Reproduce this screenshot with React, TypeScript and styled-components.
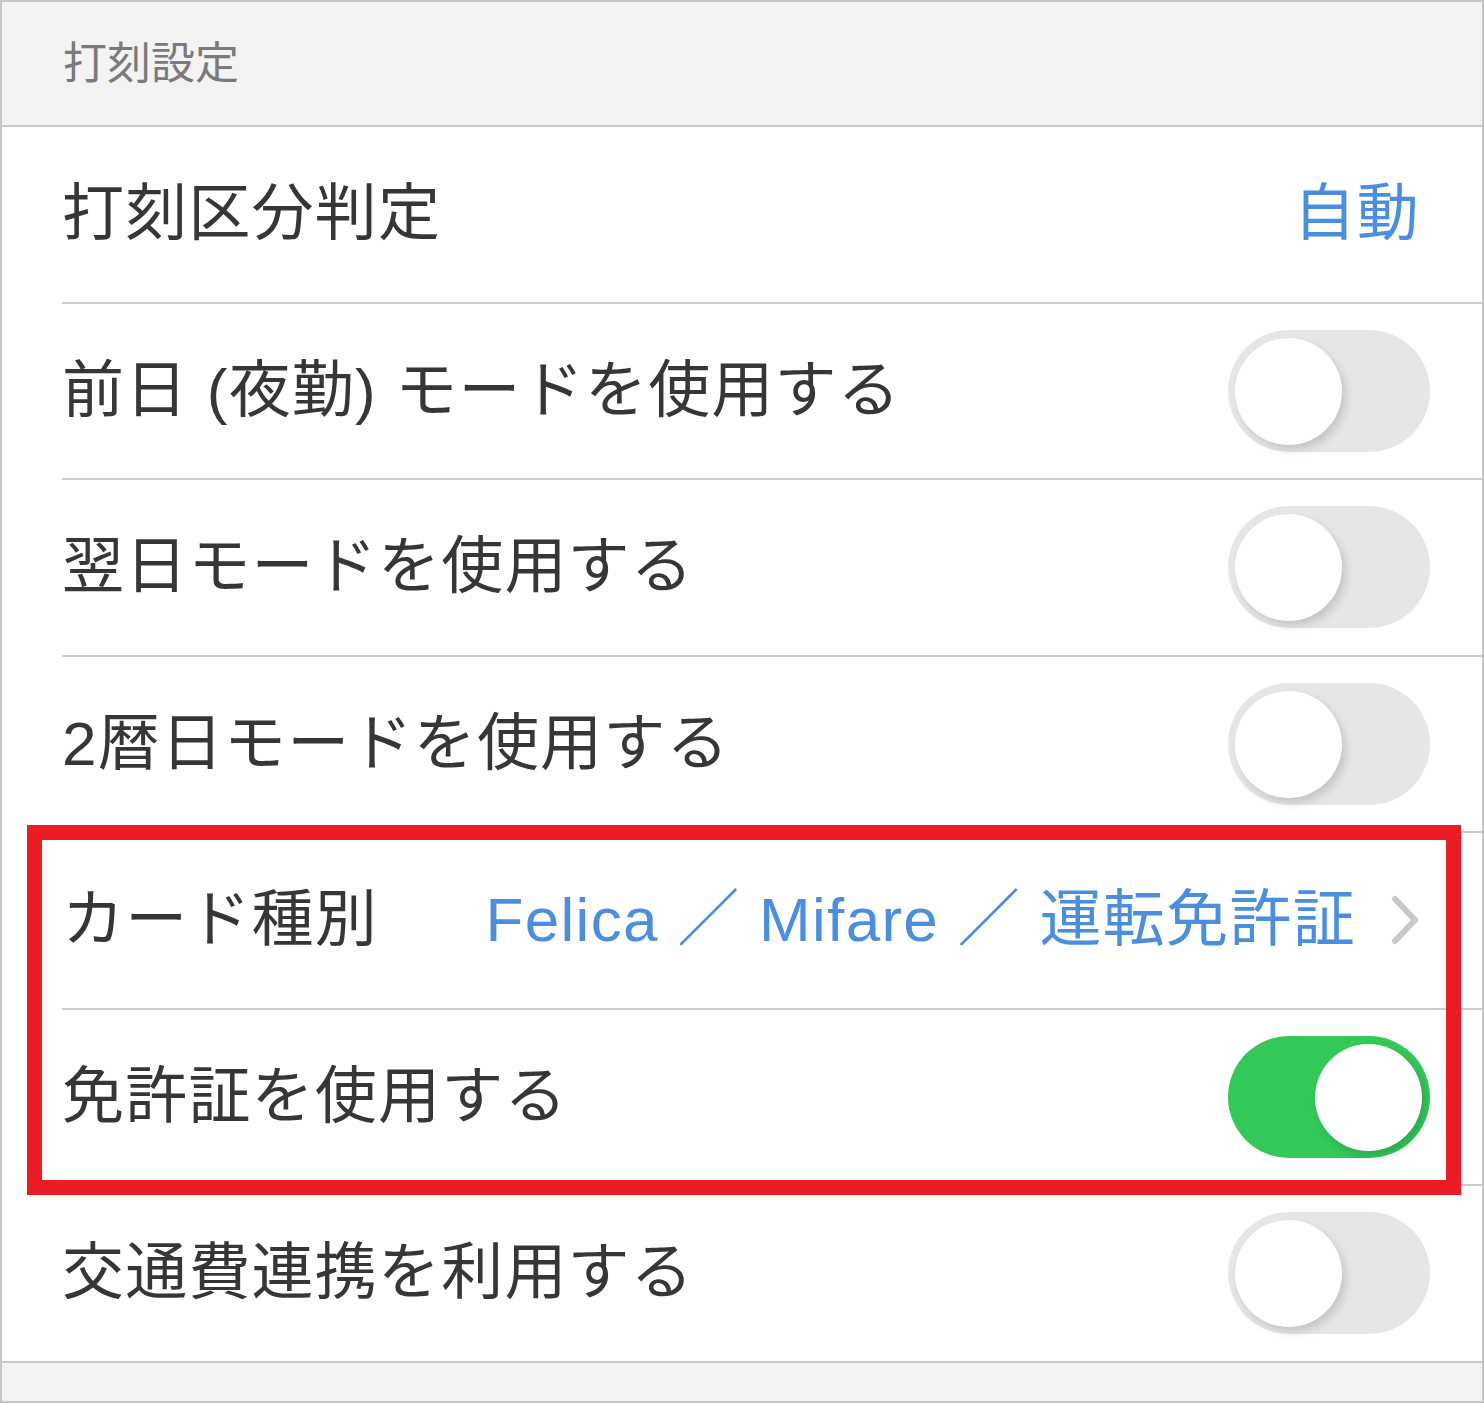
import styled, { createGlobalStyle } from "styled-components";

const GlobalStyle = createGlobalStyle`
  body {
    margin: 0;
    background: #ffffff;
    font-family: "Liberation Sans", "Noto Sans CJK JP", sans-serif;
  }
`;

type Item =
  | { kind: "value"; label: string; value: string; chevron?: boolean }
  | { kind: "toggle"; label: string; on: boolean };

const topItems: Item[] = [
  { kind: "value", label: "打刻区分判定", value: "自動" },
  { kind: "toggle", label: "前日 (夜勤) モードを使用する", on: false },
  { kind: "toggle", label: "翌日モードを使用する", on: false },
  { kind: "toggle", label: "2暦日モードを使用する", on: false },
];

const markedItems: Item[] = [
  {
    kind: "value",
    label: "カード種別",
    value: "Felica ／ Mifare ／ 運転免許証",
    chevron: true,
  },
  { kind: "toggle", label: "免許証を使用する", on: true },
];

const bottomItems: Item[] = [
  { kind: "toggle", label: "交通費連携を利用する", on: false },
];

const Chevron = () => (
  <svg width="30" height="50" viewBox="0 0 30 50">
    <polyline
      points="5,4 25,25 5,46"
      fill="none"
      stroke="#c7c7cc"
      strokeWidth="6"
      strokeLinecap="round"
      strokeLinejoin="round"
    />
  </svg>
);

const SettingRow = ({ item, last }: { item: Item; last?: boolean }) => (
  <Row $last={last}>
    <Label>{item.label}</Label>
    {item.kind === "value" ? (
      <ValueBox>
        <Value>{item.value}</Value>
        {item.chevron && <Chevron />}
      </ValueBox>
    ) : (
      <Switch $on={item.on}>
        <Knob $on={item.on} />
      </Switch>
    )}
  </Row>
);

export default function App() {
  return (
    <>
      <GlobalStyle />
      <Screen>
        <SectionHeader>打刻設定</SectionHeader>
        <List>
          {topItems.map((item) => (
            <SettingRow key={item.label} item={item} />
          ))}
          <Marked>
            {markedItems.map((item) => (
              <SettingRow key={item.label} item={item} />
            ))}
            <Highlight />
          </Marked>
          {bottomItems.map((item, i) => (
            <SettingRow
              key={item.label}
              item={item}
              last={i === bottomItems.length - 1}
            />
          ))}
        </List>
        <Footer />
      </Screen>
    </>
  );
}

const Screen = styled.div`
  width: 1484px;
  height: 1403px;
  box-sizing: border-box;
  border: 2px solid #c6c6c6;
  display: flex;
  flex-direction: column;
  overflow: hidden;
`;

const SectionHeader = styled.div`
  height: 123px;
  display: flex;
  align-items: center;
  padding-left: 61px;
  background: #f3f3f3;
  border-bottom: 2px solid #c8c8c8;
  color: #7a7a7a;
  font-size: 44px;
  line-height: 1;
`;

const List = styled.div`
  display: flex;
  flex-direction: column;
  background: #ffffff;
`;

const Row = styled.div<{ $last?: boolean }>`
  height: 174.5px;
  margin-left: 60px;
  padding-right: 52px;
  display: flex;
  align-items: center;
  justify-content: space-between;
  border-bottom: ${({ $last }) => ($last ? "none" : "2px solid #cccccc")};
`;

const Label = styled.span`
  font-size: 62px;
  line-height: 1;
  letter-spacing: 1.2px;
  color: #363636;
  white-space: nowrap;
`;

const ValueBox = styled.div`
  display: flex;
  align-items: center;
  gap: 34px;
  margin-right: 10px;
`;

const Value = styled.span`
  font-size: 62px;
  line-height: 1;
  letter-spacing: 1.3px;
  color: #4b8ee0;
  white-space: nowrap;
`;

const Switch = styled.div<{ $on: boolean }>`
  position: relative;
  width: 202px;
  height: 122px;
  border-radius: 61px;
  background: ${({ $on }) => ($on ? "#34c759" : "#e6e6e9")};
  flex-shrink: 0;
`;

const Knob = styled.div<{ $on: boolean }>`
  position: absolute;
  top: 8px;
  left: ${({ $on }) => ($on ? "87px" : "7px")};
  width: 107px;
  height: 107px;
  border-radius: 50%;
  background: #ffffff;
  box-shadow: 4px 5px 8px rgba(0, 0, 0, 0.14);
`;

const Marked = styled.div`
  position: relative;
  display: flex;
  flex-direction: column;
`;

const Highlight = styled.div`
  position: absolute;
  left: 25px;
  right: 21px;
  top: -8px;
  bottom: -9px;
  border: 15px solid #ec1c24;
  pointer-events: none;
`;

const Footer = styled.div`
  flex: 1;
  background: #f3f3f3;
  border-top: 2px solid #c8c8c8;
`;
